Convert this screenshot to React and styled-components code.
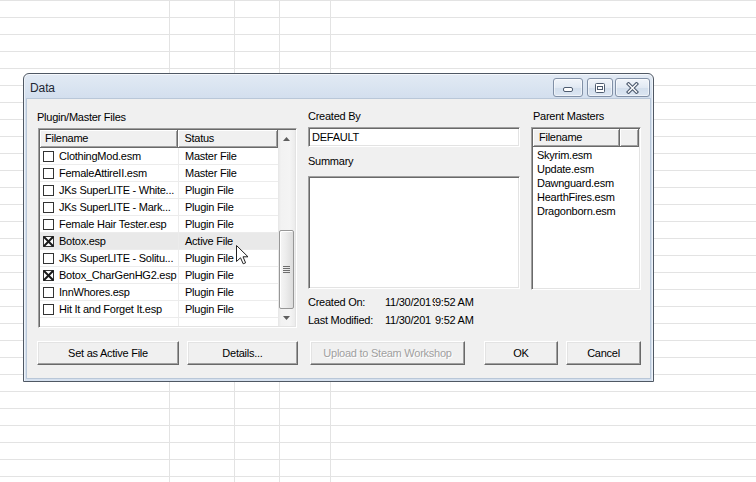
import React from 'react';
import styled, { createGlobalStyle } from 'styled-components';

const GlobalStyle = createGlobalStyle`
  html, body { margin: 0; padding: 0; background: #fff; }
  body { overflow: hidden; }
  * { box-sizing: border-box; }
`;

const GRID = '#e3e3e3';

const Sheet = styled.div`
  position: relative;
  width: 756px;
  height: 482px;
  padding: 73px 0 0 23px;
  background-color: #fff;
  background-image:
    repeating-linear-gradient(to bottom, ${GRID} 0, ${GRID} 1px, transparent 1px, transparent 17px),
    linear-gradient(to right,
      transparent 169px, ${GRID} 169px, ${GRID} 170px,
      transparent 170px, transparent 234px, ${GRID} 234px, ${GRID} 235px,
      transparent 235px, transparent 279px, ${GRID} 279px, ${GRID} 280px,
      transparent 280px, transparent 330px, ${GRID} 330px, ${GRID} 331px,
      transparent 331px);
  font-family: "Liberation Sans", Arial, sans-serif;
  font-size: 11px;
  letter-spacing: -0.25px;
  color: #000;
`;

const Window = styled.div`
  width: 631px;
  height: 309px;
  display: flex;
  flex-direction: column;
  border: 1px solid #4f5864;
  border-radius: 6px 6px 0 0;
  padding: 0 3px 3px;
  background: linear-gradient(to bottom, #e2eaf4 0, #d3dfee 24px, #d6e1ef 100%);
  box-shadow: inset 0 1px 0 #f5f8fc, inset 1px 0 0 #eef3f9, inset -1px 0 0 #eef3f9;
`;

const TitleBar = styled.div`
  height: 25px;
  display: flex;
  align-items: flex-start;
  padding-left: 3px;
`;

const TitleText = styled.div`
  flex: 1;
  font-size: 12px;
  letter-spacing: -0.1px;
  line-height: 14px;
  margin-top: 7px;
  color: #1e2733;
`;

const CaptionButton = styled.div`
  width: ${p => p.$w}px;
  height: 19px;
  margin-top: 4px;
  margin-left: ${p => p.$ml}px;
  border: 1px solid #8190a6;
  border-radius: 3px;
  background: linear-gradient(to bottom, #f1f5fa 0%, #e1e9f3 50%, #d2deec 51%, #dce6f2 100%);
  box-shadow: inset 0 0 0 1px rgba(255, 255, 255, 0.55);
  display: flex;
  align-items: center;
  justify-content: center;
`;

const Client = styled.div`
  flex: 1;
  background: #f0f0f0;
  box-shadow: 0 0 0 1px #b9c7d8;
  padding: 12px 9px 0 10px;
  display: flex;
  flex-direction: column;
`;

const Columns = styled.div`
  display: grid;
  grid-template-columns: 271px 223px 110px;
  align-items: start;
`;

const Column = styled.div`
  display: flex;
  flex-direction: column;
  margin-top: ${p => p.$mt || 0}px;
`;

const Label = styled.div`
  height: 13px;
  line-height: 13px;
  padding-left: ${p => p.$pl || 0}px;
  margin-top: ${p => p.$mt || 0}px;
  white-space: nowrap;
`;

const sunken = `
  border-style: solid;
  border-width: 1px;
  border-color: #a0a0a0 #ffffff #ffffff #a0a0a0;
  box-shadow: inset 1px 1px 0 #696969, inset -1px -1px 0 #e3e3e3;
  padding: 1px;
`;

const ListBox = styled.div`
  ${sunken}
  width: ${p => p.$w}px;
  height: ${p => p.$h}px;
  margin-top: ${p => p.$mt}px;
  margin-left: ${p => p.$ml || 0}px;
  background: #fff;
  display: flex;
  overflow: hidden;
`;

const ListMain = styled.div`
  flex: 1;
  display: flex;
  flex-direction: column;
  min-width: 0;
`;

const HeaderRow = styled.div`
  display: flex;
  height: 18px;
  flex-shrink: 0;
`;

const HeaderCell = styled.div`
  width: ${p => p.$w}px;
  height: 18px;
  line-height: 17px;
  padding-left: ${p => p.$pl}px;
  background: #f0f0f0;
  border-right: 1px solid #696969;
  border-bottom: 1px solid #696969;
  box-shadow: inset 1px 1px 0 #ffffff, inset -1px -1px 0 #a0a0a0;
  white-space: nowrap;
  overflow: hidden;
`;

const Body = styled.div`
  flex: 1;
  display: flex;
  flex-direction: column;
  background: linear-gradient(to right, transparent 138px, #ececec 138px, #ececec 139px, transparent 139px);
`;

const Row = styled.div`
  display: grid;
  grid-template-columns: 139px 100px;
  height: 17px;
  line-height: 16px;
  border-bottom: 1px solid #ececec;
  background: ${p => (p.$hover ? '#e9e9e9' : 'transparent')};
  white-space: nowrap;
`;

const NameCell = styled.div`
  display: flex;
  align-items: center;
  padding-left: 3px;
  gap: 5px;
  overflow: hidden;
  border-right: 1px solid #ececec;
`;

const StatusCell = styled.div`
  padding-left: 6px;
  overflow: hidden;
`;

const ScrollBar = styled.div`
  width: 17px;
  display: flex;
  flex-direction: column;
  flex-shrink: 0;
  background: linear-gradient(to right, #e6e6e6 0, #f2f2f2 3px, #f4f4f4 12px, #ebebeb 17px);
`;

const ArrowButton = styled.div`
  height: 17px;
  display: flex;
  align-items: center;
  justify-content: center;
  flex-shrink: 0;
`;

const Track = styled.div`
  flex: 1;
  display: flex;
  flex-direction: column;
  justify-content: flex-end;
  padding: 0 1px;
`;

const Thumb = styled.div`
  height: 79px;
  border: 1px solid #979797;
  border-radius: 2px;
  background: linear-gradient(to right, #f6f6f6 0%, #ececec 45%, #dcdcdc 100%);
  box-shadow: inset 1px 1px 0 #fff;
  display: flex;
  align-items: center;
  justify-content: center;
`;

const TextField = styled.div`
  ${sunken}
  width: ${p => p.$w}px;
  height: ${p => p.$h}px;
  margin-top: ${p => p.$mt}px;
  background: #fff;
  padding: 2px 3px;
  line-height: 14px;
`;

const InfoRow = styled.div`
  display: flex;
  height: 13px;
  line-height: 13px;
  margin-top: ${p => p.$mt}px;
  white-space: nowrap;
`;

const InfoKey = styled.span`
  width: 77px;
`;

const InfoDate = styled.span`
  width: 47px;
`;

const PartialDigit = styled.span`
  width: 3px;
  overflow: hidden;
`;

const InfoTime = styled.span`
  margin-left: ${p => p.$ml}px;
`;

const MasterItems = styled.div`
  padding-top: 1px;
  display: flex;
  flex-direction: column;
`;

const MasterItem = styled.div`
  height: 14px;
  line-height: 14px;
  padding-left: 4px;
  white-space: nowrap;
`;

const ButtonRow = styled.div`
  display: flex;
  margin-top: 13px;
`;

const Button = styled.div`
  width: ${p => p.$w}px;
  height: 24px;
  margin-left: ${p => p.$ml || 0}px;
  display: flex;
  align-items: center;
  justify-content: center;
  background: #f0f0f0;
  border-style: solid;
  border-width: 1px;
  border-color: #ffffff #696969 #696969 #ffffff;
  box-shadow: inset -1px -1px 0 #a0a0a0, inset 1px 1px 0 #e3e3e3;
  color: ${p => (p.$disabled ? '#a0a0a0' : '#000')};
  text-shadow: ${p => (p.$disabled ? '1px 1px 0 #fff' : 'none')};
  white-space: nowrap;
`;

const Cursor = styled.svg`
  position: absolute;
  left: 236px;
  top: 245px;
`;

const CheckBox = ({ checked }) => (
  <svg width="11" height="11" viewBox="0 0 11 11" style={{ flexShrink: 0 }}>
    <rect x="0.5" y="0.5" width="10" height="10" fill="#fff" stroke="#333" />
    {checked && (
      <g stroke="#1a1a1a" strokeWidth="2" strokeLinecap="square">
        <line x1="1.5" y1="1.5" x2="9.5" y2="9.5" />
        <line x1="9.5" y1="1.5" x2="1.5" y2="9.5" />
      </g>
    )}
  </svg>
);

const Arrow = ({ down }) => (
  <svg width="7" height="4" viewBox="0 0 7 4">
    <path d={down ? 'M0 0 L7 0 L3.5 4 Z' : 'M0 4 L7 4 L3.5 0 Z'} fill="#5e5e5e" />
  </svg>
);

const Grip = () => (
  <svg width="7" height="8" viewBox="0 0 7 8">
    {[0, 2, 4, 6].map(y => (
      <rect key={y} x="0" y={y} width="7" height="1" fill="#6d6d6d" />
    ))}
  </svg>
);

const MinIcon = () => (
  <svg width="12" height="12" viewBox="0 0 12 12">
    <rect x="1.5" y="5.5" width="9" height="4" rx="1.5" fill="#fff" stroke="#4e5c70" />
  </svg>
);

const MaxIcon = () => (
  <svg width="12" height="12" viewBox="0 0 12 12">
    <rect x="1.5" y="1.5" width="9" height="9" rx="1" fill="#fff" stroke="#4e5c70" />
    <rect x="3.5" y="4.5" width="5" height="3" fill="none" stroke="#4e5c70" />
  </svg>
);

const CloseIcon = () => (
  <svg width="13" height="12" viewBox="0 0 13 12">
    <g strokeLinecap="square">
      <path d="M2.5 2 L10.5 10 M10.5 2 L2.5 10" stroke="#4e5c70" strokeWidth="3.6" />
      <path d="M2.5 2 L10.5 10 M10.5 2 L2.5 10" stroke="#ffffff" strokeWidth="1.4" />
    </g>
  </svg>
);

const plugins = [
  { name: 'ClothingMod.esm', status: 'Master File' },
  { name: 'FemaleAttireII.esm', status: 'Master File' },
  { name: 'JKs SuperLITE - White...', status: 'Plugin File' },
  { name: 'JKs SuperLITE - Mark...', status: 'Plugin File' },
  { name: 'Female Hair Tester.esp', status: 'Plugin File' },
  { name: 'Botox.esp', status: 'Active File', checked: true, hover: true },
  { name: 'JKs SuperLITE - Solitu...', status: 'Plugin File' },
  { name: 'Botox_CharGenHG2.esp', status: 'Plugin File', checked: true },
  { name: 'InnWhores.esp', status: 'Plugin File' },
  { name: 'Hit It and Forget It.esp', status: 'Plugin File' },
];

const masters = ['Skyrim.esm', 'Update.esm', 'Dawnguard.esm', 'HearthFires.esm', 'Dragonborn.esm'];

export default function App() {
  return (
    <>
      <GlobalStyle />
      <Sheet>
        <Window>
          <TitleBar>
            <TitleText>Data</TitleText>
            <CaptionButton $w={30} $ml={0}><MinIcon /></CaptionButton>
            <CaptionButton $w={26} $ml={4}><MaxIcon /></CaptionButton>
            <CaptionButton $w={35} $ml={2}><CloseIcon /></CaptionButton>
          </TitleBar>
          <Client>
            <Columns>
              <Column $mt={0}>
                <Label>Plugin/Master Files</Label>
                <ListBox $w={259} $h={200} $mt={4} $ml={1}>
                  <ListMain>
                    <HeaderRow>
                      <HeaderCell $w={139} $pl={5}>Filename</HeaderCell>
                      <HeaderCell $w={100} $pl={6}>Status</HeaderCell>
                    </HeaderRow>
                    <Body>
                      {plugins.map(p => (
                        <Row key={p.name} $hover={p.hover}>
                          <NameCell>
                            <CheckBox checked={p.checked} />
                            <span>{p.name}</span>
                          </NameCell>
                          <StatusCell>{p.status}</StatusCell>
                        </Row>
                      ))}
                    </Body>
                  </ListMain>
                  <ScrollBar>
                    <ArrowButton><Arrow /></ArrowButton>
                    <Track>
                      <Thumb><Grip /></Thumb>
                    </Track>
                    <ArrowButton><Arrow down /></ArrowButton>
                  </ScrollBar>
                </ListBox>
              </Column>
              <Column $mt={-1}>
                <Label>Created By</Label>
                <TextField $w={212} $h={20} $mt={4}>DEFAULT</TextField>
                <Label $mt={8}>Summary</Label>
                <TextField $w={212} $h={113} $mt={8} />
                <InfoRow $mt={7}>
                  <InfoKey>Created On:</InfoKey>
                  <InfoDate>11/30/201</InfoDate>
                  <PartialDigit>9</PartialDigit>
                  <InfoTime $ml={0}>9:52 AM</InfoTime>
                </InfoRow>
                <InfoRow $mt={5}>
                  <InfoKey>Last Modified:</InfoKey>
                  <InfoDate>11/30/201</InfoDate>
                  <InfoTime $ml={3}>9:52 AM</InfoTime>
                </InfoRow>
              </Column>
              <Column $mt={-1}>
                <Label $pl={2}>Parent Masters</Label>
                <ListBox $w={110} $h={163} $mt={4}>
                  <ListMain>
                    <HeaderRow>
                      <HeaderCell $w={87} $pl={6}>Filename</HeaderCell>
                      <HeaderCell $w={19} $pl={0} />
                    </HeaderRow>
                    <MasterItems>
                      {masters.map(m => (
                        <MasterItem key={m}>{m}</MasterItem>
                      ))}
                    </MasterItems>
                  </ListMain>
                </ListBox>
              </Column>
            </Columns>
            <ButtonRow>
              <Button $w={142}>Set as Active File</Button>
              <Button $w={111} $ml={8}>Details...</Button>
              <Button $w={155} $ml={12} $disabled>Upload to Steam Workshop</Button>
              <Button $w={74} $ml={19}>OK</Button>
              <Button $w={75} $ml={8}>Cancel</Button>
            </ButtonRow>
          </Client>
        </Window>
        <Cursor width="13" height="20" viewBox="0 0 13 20">
          <path
            d="M0.5 0.5 L0.5 16.5 L4.5 12.8 L7.2 18.8 L9.6 17.8 L7 11.8 L12 11.8 Z"
            fill="#fff"
            stroke="#222"
            strokeWidth="1"
            strokeLinejoin="round"
          />
        </Cursor>
      </Sheet>
    </>
  );
}
